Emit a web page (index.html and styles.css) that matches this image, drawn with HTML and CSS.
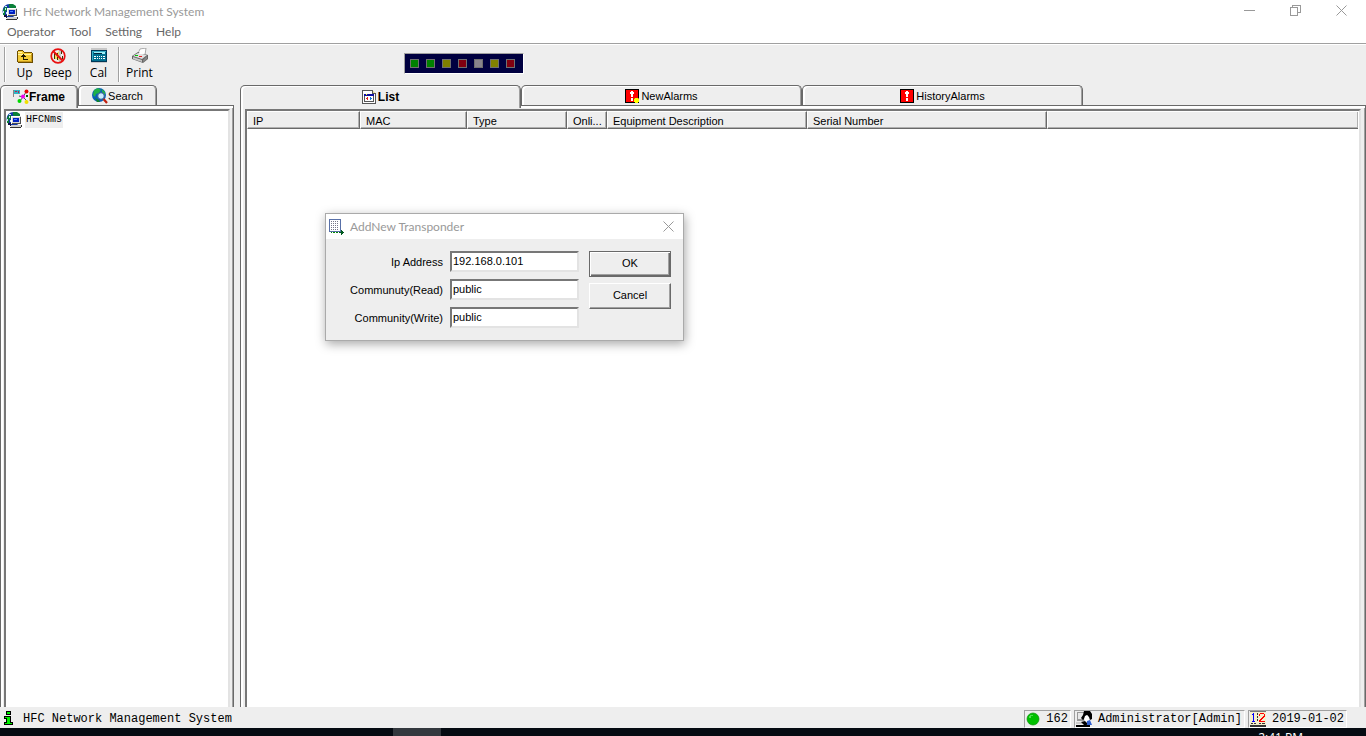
FILE: index.html
```html
<!DOCTYPE html>
<html lang="en">
<head>
<meta charset="utf-8">
<title>Hfc Network Management System</title>
<link rel="stylesheet" href="styles.css">
</head>
<body>
<svg class="defs" aria-hidden="true">
  <symbol id="globe" viewBox="0 0 16 16">
    <circle cx="7.500" cy="7" r="7" fill="#1238a8"/>
    <path d="M7 0h4l3 2v3H9L7 3zM1 6l2-3h2v3L3 8v3H1z" fill="#0a8038"/>
    <path d="M3 2h2v1H3zM1 7h1v2H1zM3 4h1v2H3zM4 8h1v2H4z" fill="#c8e8f8"/>
    <path d="M2 11h3v3H4v-1H2z" fill="#101040"/>
    <path d="M5 4h10v8H5z" fill="#d8d8d8"/><path d="M5 4h9v1H6v7H5z" fill="#fff"/>
    <path d="M7 6h6v4H7z" fill="#0020c0"/><path d="M8 7h3v1H8z" fill="#4a80ff"/>
    <path d="M14 5h1v7h-1zM6 11h9v1H6z" fill="#505050"/>
    <path d="M5 13h11v2H5z" fill="#d0d0d0"/><path d="M4 15h11v1H4zM15 13h1v2h-1z" fill="#333"/>
  </symbol>
  <symbol id="alarm" viewBox="0 0 14 14">
    <path d="M0 0h14v14H0z" fill="#000"/><path d="M1 1h12v12H1z" fill="#f00"/>
    <path d="M6 2h2v1h1v2H8v3H6V5H5V3h1zM6 9h2v3H6z" fill="#fff"/>
  </symbol>
</svg>
<div class="window">
  <header class="titlebar">
    <svg class="icon16 smooth" viewBox="0 0 16 16"><use href="#globe"/></svg>
    <h1 class="title">Hfc Network Management System</h1>
    <div class="controls">
      <button class="control" aria-label="Minimize"><svg viewBox="0 0 11 11"><path d="M0 5.500h11" /></svg></button>
      <button class="control" aria-label="Restore"><svg viewBox="0 0 11 11"><path d="M.5 2.500h7v8h-7zM2.500 2.500v-2h8v7h-3"/></svg></button>
      <button class="control" aria-label="Close"><svg viewBox="0 0 11 11" class="smooth"><path d="M.5.5l10 10M10.500.5l-10 10"/></svg></button>
    </div>
  </header>
  <nav class="menubar">
    <button class="menu">Operator</button><button class="menu">Tool</button><button class="menu">Setting</button><button class="menu">Help</button>
  </nav>
  <div class="toolbar">
    <div class="group group-nav">
      <button class="tool">
        <svg class="icon16" viewBox="0 0 16 16"><path d="M1 2h5v1H1zM0 3h1v11H0zM6 3h1v1H6zM7 4h8v1H7zM1 14h15v1H1zM15 5h1v9h-1z" fill="#6a4c00"/><path d="M1 3h5v1h1v1h8v9H1z" fill="#f4cc38"/><path d="M1 4h4v1H1zM1 6h13v1H1z" fill="#fff2a0"/><path d="M1 13h14v1H1zM14 6h1v7h-1z" fill="#c89818"/><path d="M6 6h1v1h1v1h1v1H7v2h4v1H6V9H4V8h1V7h1z" fill="#201800"/></svg>
        Up
      </button>
      <button class="tool">
        <svg class="icon16 smooth" viewBox="0 0 16 16"><path d="M4 5h3l2-2v10l-2-2H4z" fill="#f0e060"/><path d="M9 2h2v12H9z" fill="#c8c8c8"/><path d="M4 5h1v6H4zM7 5h1v2H7zM7 9h1v3H7zM11 3h1v3h-1zM12 8h1v3h-1z" fill="#403000"/><circle cx="8" cy="8" r="6.800" fill="none" stroke="#e81010" stroke-width="1.700"/><path d="M3.500 3.500l9 9" stroke="#e81010" stroke-width="2"/></svg>
        Beep
      </button>
    </div>
    <div class="group group-cal">
      <button class="tool">
        <svg class="icon16" viewBox="0 0 16 16"><path d="M0 0h16v15H0z" fill="#c8c8c8"/><path d="M0 2h16v12H0z" fill="#003858"/><path d="M1 3h14v10H1z" fill="#007090"/><path d="M1 3h14v1H1zM1 4h1v8H1z" fill="#38b0c8"/><path d="M3 4h11v2H3z" fill="#a0f0f8"/><path d="M3 5h8v1H3z" fill="#002840"/><path d="M3 8h2v1H3zM6 8h1v1H6zM8 8h1v1H8zM10 8h1v1h-1zM12 8h2v1h-2zM3 10h2v1H3zM6 10h1v1H6zM8 10h1v1H8zM10 10h1v1h-1zM12 10h2v1h-2z" fill="#fff"/></svg>
        Cal
      </button>
    </div>
    <div class="group group-print">
      <button class="tool">
        <svg class="icon16 smooth" viewBox="0 0 16 16"><path d="M6 6l2-5 6-1-1 7z" fill="#fff" stroke="#888" stroke-width=".7"/><path d="M0 8l6-4 10 3v4l-5 4L0 11z" fill="#666"/><path d="M1 8l5-3 9 2-5 4z" fill="#e0e0e0"/><path d="M1 9l9 3v2l-9-3z" fill="#c8c8c8"/><path d="M11 12l4-4v3l-4 3z" fill="#888"/><path d="M7 6l1-4 5-1-1 5z" fill="#fff"/><path d="M3 7h3v1H3z" fill="#00c000"/><path d="M7 8h3v1H7z" fill="#e02020"/></svg>
        Print
      </button>
    </div>
    <div class="leds" aria-label="Status lights">
      <span class="led green"></span><span class="led green"></span><span class="led olive"></span><span class="led red"></span><span class="led gray"></span><span class="led olive"></span><span class="led red"></span>
    </div>
  </div>

  <main class="main">
    <section class="pane side">
      <div class="tabs" role="tablist">
        <button class="tab active" role="tab" aria-selected="true"><svg class="icon16 smooth" viewBox="0 0 16 16"><path d="M0 1h1v7H0z" fill="#888"/><path d="M1 1h6v4H1z" fill="#30b8c8"/><path d="M2 2h2v1H2zM5 2h1v2H5z" fill="#c02050"/><path d="M13 3l-3 5-3 4M10 8l4 4M6 7l4 1" stroke="#555" fill="none"/><circle cx="13.500" cy="2.500" r="2" fill="#e80000"/><circle cx="10" cy="7.500" r="2" fill="#f000f0"/><circle cx="6.500" cy="12" r="2" fill="#00d800"/><circle cx="13.500" cy="13" r="2" fill="#f0e000"/><path d="M13 6h2v2h-2z" fill="#006000"/></svg>Frame</button>
        <button class="tab" role="tab" aria-selected="false"><svg class="icon16 smooth" viewBox="0 0 16 16"><circle cx="7" cy="7" r="7" fill="#0860b8"/><path d="M2 2l4-2 3 2-2 3-3 1-1 3-2-2zM10 1l3 3v3l-3-3z" fill="#20b048"/><path d="M3 10l4 2 1 2H5z" fill="#108030"/><circle cx="9" cy="8" r="3.300" fill="#c8ecff" stroke="#345c90"/><path d="M11.500 11l3.500 4" stroke="#c02010" stroke-width="2.200"/></svg>Search</button>
      </div>
      <div class="page">
        <div class="well tree">
          <a class="node" href="#root"><svg class="icon16 smooth" viewBox="0 0 16 16"><use href="#globe"/></svg><span class="node-text">HFCNms</span></a>
        </div>
      </div>
    </section>
    <section class="pane content">
      <div class="tabs" role="tablist">
        <button class="tab active" role="tab" aria-selected="true"><svg class="icon14" viewBox="0 0 14 14"><path d="M0 0h11v1h1v1h1v1h1v11H0z" fill="#555"/><path d="M1 1h9v3h3v9H1z" fill="#fff"/><path d="M11 1h1v1h1v1h-2z" fill="#e8e0a0"/><path d="M2 4h10v8H2z" fill="#555"/><path d="M3 6h8v5H3z" fill="#fff"/><path d="M2 4h10v2H2z" fill="#1010a0"/><path d="M4 4h1v1H4z" fill="#ff0"/><path d="M4 8h1v1H4zM5 7h1v3H5z" fill="#e02020"/><path d="M8 7h1v3H8zM9 8h1v1H9z" fill="#1878d0"/></svg>List</button>
        <button class="tab" role="tab" aria-selected="false"><svg class="icon14" viewBox="0 0 14 14"><use href="#alarm"/><path d="M10 9h3v1h1v3h-1v1h-3v-1H9v-3h1z" fill="#ff0"/><path d="M9 9h1v1H9zM13 9h1v1h-1z" fill="#c08000"/></svg>NewAlarms</button>
        <button class="tab" role="tab" aria-selected="false"><svg class="icon14" viewBox="0 0 14 14"><use href="#alarm"/></svg>HistoryAlarms</button>
      </div>
      <div class="page">
        <div class="well">
          <table class="list">
            <colgroup><col class="c-ip"><col class="c-mac"><col class="c-type"><col class="c-online"><col class="c-desc"><col class="c-serial"><col></colgroup>
            <thead><tr><th>IP</th><th>MAC</th><th>Type</th><th>Onli...</th><th>Equipment Description</th><th>Serial Number</th><th></th></tr></thead>
          </table>
        </div>
      </div>
    </section>
  </main>

  <footer class="statusbar">
    <svg class="info" viewBox="0 0 9 14"><path d="M2 0h5v4H2zM0 5h7v6h2v3H0v-3h2V8H0z" fill="#000"/><path d="M3 1h3v2H3zM1 6h5v6h2v1H1v-1h2V7H1z" fill="#00f000"/></svg>
    <span class="status-text">HFC Network Management System</span>
    <span class="cell"><svg class="icon14 smooth" viewBox="0 0 14 14"><circle cx="7" cy="7" r="6" fill="#00c000" stroke="#0a900a" stroke-width=".7"/><path d="M4 3h3v1H5v2H3V4h1z" fill="#50e050"/></svg>162</span>
    <span class="cell"><svg class="icon16 smooth" viewBox="0 0 16 16"><path d="M1 1h9v9H1z" fill="#999"/><path d="M2 2h6v6H2z" fill="#e8e8e8"/><path d="M0 11h8v2H0z" fill="#ccc"/><path d="M0 14h14v2H0z" fill="#000"/><path d="M8 0h6l2 3v5l-2 1-1-3-2-2-1 2-3 3-2-2 2-3z" fill="#000"/><path d="M9 5l2-1 2 3v3h-2l-2 1-1-3z" fill="#fff"/><path d="M5 11l4-1 3 3-3 2z" fill="#000"/><path d="M11 10l3-1 2 5h-5z" fill="#3060d0"/></svg>Administrator[Admin]</span>
    <span class="cell"><svg class="icon16" viewBox="0 0 16 16"><path d="M0 0h16v14H0z" fill="#f4eecc"/><path d="M0 0h16v1H0z" fill="#777"/><path d="M3 2h1v8h1v1H2v-1h1V4H2V3h1z" fill="#00f"/><path d="M9 3h1V2h4v1h1v3h-1v1h-1v1h-1v1h-1v1h4v1H9V9h1V8h1V7h1V6h1V5h1V3h-4v2H9z" fill="#f00"/><path d="M7 2h1v2H7zM7 5h1v2H7zM7 8h1v2H7zM1 12h2v1H1zM4 12h2v1H4zM9 12h2v1H9zM12 12h3v1h-3zM0 14h16v2H0z" fill="#333"/></svg>2019-01-02</span>
  </footer>
  <div class="taskbar"><span class="task"></span><span class="clock">2:41 PM</span></div>

  <div class="dialog" role="dialog" aria-labelledby="dialog-title">
    <div class="dialog-bar">
      <svg class="icon16" viewBox="0 0 16 16"><path d="M0 0h12v13H0z" fill="#5870a8"/><path d="M1 1h10v11H1z" fill="#fff"/><path d="M2 2.500h8M2 4.500h8M2 6.500h8M2 8.500h8M2 10.500h8" stroke="#778" stroke-dasharray="1 1"/><path d="M2 13h1v1H2zM4 13h2v1H4zM7 13h2v1H7z" fill="#080"/><path d="M10 13h2v-2h1v1h1v1h1v1h-1v1h-1v1h-1v-2h-2z" fill="#005a20"/></svg>
      <h2 class="title" id="dialog-title">AddNew Transponder</h2>
      <button class="dialog-close" aria-label="Close"><svg viewBox="0 0 11 11" class="smooth"><path d="M.5.5l10 10M10.500.5l-10 10"/></svg></button>
    </div>
    <form class="form">
      <div class="fields">
        <label for="ip">Ip Address</label><input id="ip" type="text" value="192.168.0.101">
        <label for="read">Communuty(Read)</label><input id="read" type="text" value="public">
        <label for="write">Community(Write)</label><input id="write" type="text" value="public">
      </div>
      <div class="actions">
        <button type="button" class="push default">OK</button>
        <button type="button" class="push">Cancel</button>
      </div>
    </form>
  </div>
</div>
</body>
</html>
```
FILE: styles.css
```css
* { box-sizing: border-box; }
body {
  margin: 0;
  background: #eee;
  color: #000;
  font: 11px/14px "Liberation Sans", Arial, sans-serif;
}
button { margin: 0; padding: 0; border: 0; background: none; color: inherit; font: inherit; }
svg { display: block; flex: none; shape-rendering: crispEdges; }
.smooth { shape-rendering: auto; }
.defs { position: absolute; width: 0; height: 0; }
.icon16 { width: 16px; height: 16px; }
.icon14 { width: 14px; height: 14px; }
.window { display: flex; flex-direction: column; height: 100vh; overflow: hidden; }

.titlebar { display: flex; align-items: center; height: 23px; padding: 0 2px; gap: 5px; background: #fff; }
.title { margin: 0; color: #999; font: 12px/16px Lato, "Open Sans", sans-serif; }
.controls { display: flex; margin-left: auto; }
.control { display: flex; justify-content: center; width: 46px; padding-bottom: 2px; }
.control svg, .dialog-close svg { width: 11px; height: 11px; fill: none; stroke: #999; }
.menubar {
  display: flex; gap: 14px; height: 21px; padding: 0 7px 2px;
  border-bottom: 1px solid #a0a0a0;
  background: #fff; color: #666;
  font: 12px/16px Lato, "Open Sans", sans-serif;
}

.toolbar { display: flex; height: 41px; padding: 2px 4px; border-top: 1px solid #fff; }
.group { display: flex; height: 35px; padding-left: 3px; border-left: 1px solid #a0a0a0; box-shadow: inset 1px 0 #fff; }
.tool { display: flex; flex-direction: column; align-items: center; width: 33px; padding-top: 1px; font: 12px/18px "Open Sans", "Noto Sans", sans-serif; }
.group-nav { width: 74px; }
.group-cal { width: 40px; }
.group-print { padding-left: 4px; }
.leds {
  display: flex; align-items: center; gap: 7px; width: 120px; height: 21px;
  margin: 6px 0 0 248px; padding-left: 5px;
  border: 1px solid; border-color: #a0a0a0 #fff #fff #a0a0a0;
  background: #000040;
}
.led { width: 9px; height: 9px; border: 1px solid #707070; }
.green { background: #008000; }
.olive { background: #808000; }
.red { background: #800010; }
.gray { background: #88848c; }

.main { display: flex; flex: 1; gap: 6px; min-height: 0; }
.pane { display: flex; flex-direction: column; min-width: 0; }
.side { width: 234px; }
.content { flex: 1; }
.tabs { display: flex; height: 20px; }
.tab {
  display: flex; align-items: center; justify-content: center; width: 79px; height: 20px;
  border: 1px solid #696969; border-bottom: 0; border-radius: 5px 5px 0 0;
  background: #eee;
  box-shadow: inset 2px 1px #fff, inset -1px 0 #a0a0a0;
}
.tab.active { z-index: 1; height: 23px; font-weight: bold; font-size: 12px; }
.side .tab.active { width: 78px; }
.content .tab { gap: 2px; width: 281px; }
.page {
  display: flex; flex: 1; min-height: 0; padding: 3px 3px 0;
  border: 1px solid #696969; border-bottom: 0;
  box-shadow: inset 2px 2px #fff, inset -1px 0 #a0a0a0;
}
.well {
  flex: 1; min-width: 0; padding-right: 1px;
  border: 2px solid; border-color: #777 #e3e3e3 #e3e3e3 #777; border-bottom: 0;
  background: #fff;
}
.content .page { padding: 3px 4px 0; }
.tree { padding-top: 1px; }
.node { display: flex; align-items: center; gap: 3px; color: #000; text-decoration: none; font: 10px/16px "Liberation Mono", monospace; }
.node-text { padding: 0 1px; background: #eee; }

.list { width: 100%; table-layout: fixed; border-collapse: separate; border-spacing: 0; }
.list th {
  height: 18px; padding: 1px 5px 0; overflow: hidden;
  border: solid; border-width: 1px; border-color: #fff #696969 #696969 #fff;
  box-shadow: inset -1px -1px #b0b0b0;
  background: #eee; font-weight: normal; line-height: 14px; text-align: left; white-space: nowrap;
}
.list th:last-child { border-right: 0; }
.c-ip { width: 113px; }
.c-mac { width: 107px; }
.c-type { width: 100px; }
.c-online { width: 40px; }
.c-desc { width: 200px; }
.c-serial { width: 240px; }

.statusbar { display: flex; align-items: center; gap: 3px; height: 21px; padding: 0 19px 0 4px; background: #eee; font: 12px/16px "Liberation Mono", monospace; }
.info { width: 9px; height: 14px; }
.status-text { margin: 2px auto 0 7px; }
.cell { display: flex; align-items: center; gap: 6px; height: 18px; margin-top: 2px; padding: 0 2px 0 1px; border: 1px solid; border-color: #a0a0a0 #fff #fff #a0a0a0; }
.taskbar { display: flex; justify-content: space-between; height: 8px; padding: 0 63px 0 393px; overflow: hidden; background: #050b12; }
.task { width: 48px; background: #33383e; }
.clock { padding-top: 2px; color: #fff; font: 12px/16px "Open Sans", "Noto Sans", sans-serif; }

.dialog { position: absolute; top: 213px; left: 325px; width: 359px; border: 1px solid #aaa; background: #eee; box-shadow: 1px 3px 10px rgba(0, 0, 0, .35); }
.dialog-bar { display: flex; align-items: center; gap: 5px; height: 25px; padding: 0 9px 0 3px; background: #fff; }
.dialog-close { margin-left: auto; }
.form { display: flex; justify-content: space-between; padding: 12px 12px 12px 14px; }
.fields { display: grid; grid-template-columns: 103px 129px; gap: 7px; align-items: center; }
.fields label { padding-top: 1px; text-align: right; }
.fields input {
  width: 100%; height: 21px; padding: 0 1px 2px; border: 2px solid; border-color: #777 #e3e3e3 #e3e3e3 #777;
  background: #fff; color: #000; font: inherit; outline: 0;
}
.actions { display: flex; flex-direction: column; gap: 6px; }
.push { width: 82px; height: 26px; padding-bottom: 2px; border: 1px solid; border-color: #fff #696969 #696969 #fff; background: #eee; box-shadow: inset -1px -1px #a0a0a0; }
.push.default { border-color: #696969; box-shadow: inset 1px 1px #fff, inset -1px -1px #696969, inset -2px -2px #a0a0a0; }
```
